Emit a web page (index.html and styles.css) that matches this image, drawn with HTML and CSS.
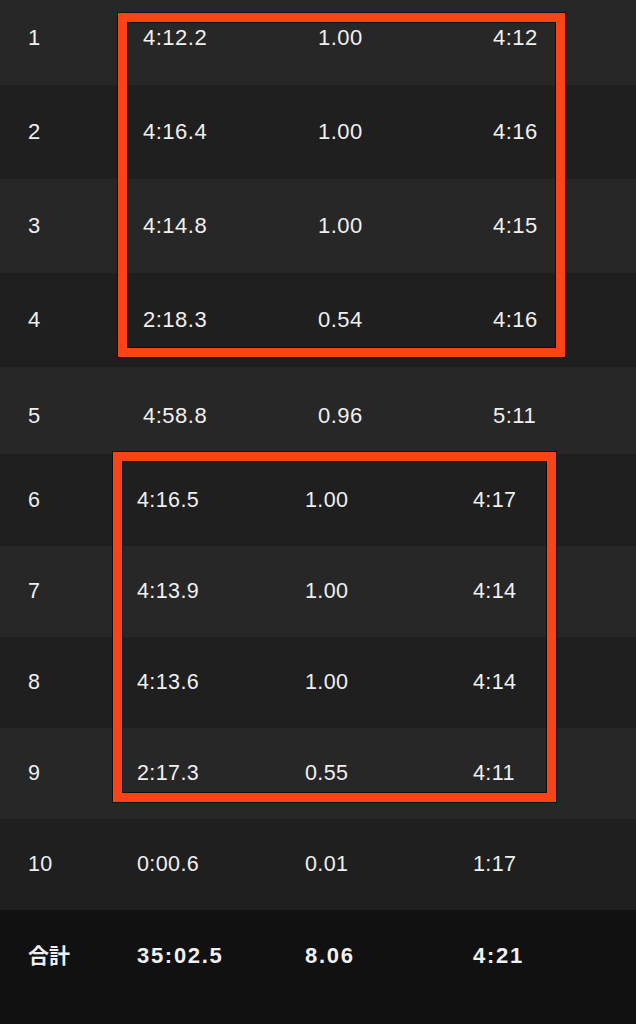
FILE: index.html
```html
<!DOCTYPE html>
<html lang="ja">
<head>
    <meta charset="UTF-8">
    <meta name="viewport" content="width=device-width, initial-scale=1.0">
    <title>Splits</title>
    <link rel="stylesheet" href="styles.css">
</head>
<body>
    <main class="splits">

        <!-- first part : laps 1 - 5 -->
        <div class="part part_top">
            <div class="row row_light row_first">
                <span>1</span><span>4:12.2</span><span>1.00</span><span>4:12</span>
            </div>
            <div class="row row_dark">
                <span>2</span><span>4:16.4</span><span>1.00</span><span>4:16</span>
            </div>
            <div class="row row_light">
                <span>3</span><span>4:14.8</span><span>1.00</span><span>4:15</span>
            </div>
            <div class="row row_dark">
                <span>4</span><span>2:18.3</span><span>0.54</span><span>4:16</span>
            </div>
            <div class="row row_light row_last">
                <span>5</span><span>4:58.8</span><span>0.96</span><span>5:11</span>
            </div>
            <div class="mark mark_top"></div>
        </div>

        <!-- second part : laps 6 - 10 and total -->
        <div class="part part_bottom">
            <div class="row row_dark">
                <span>6</span><span>4:16.5</span><span>1.00</span><span>4:17</span>
            </div>
            <div class="row row_light">
                <span>7</span><span>4:13.9</span><span>1.00</span><span>4:14</span>
            </div>
            <div class="row row_dark">
                <span>8</span><span>4:13.6</span><span>1.00</span><span>4:14</span>
            </div>
            <div class="row row_light">
                <span>9</span><span>2:17.3</span><span>0.55</span><span>4:11</span>
            </div>
            <div class="row row_dark">
                <span>10</span><span>0:00.6</span><span>0.01</span><span>1:17</span>
            </div>
            <div class="row row_total">
                <span class="total_label">合計</span><span>35:02.5</span><span>8.06</span><span>4:21</span>
            </div>
            <div class="mark mark_bottom"></div>
        </div>

    </main>
</body>
</html>
```

FILE: styles.css
```css
/* General */
*{
    box-sizing: border-box;
}
html, body{
    margin: 0px;
    padding: 0px;
}
body{
    background-color: #111111;
    color: #f0f0f0;
    font-family: "Liberation Sans", "Noto Sans CJK JP", sans-serif;
}
.splits{
    display: flex;
    flex-direction: column;
    width: 636px;
    min-height: 1024px;
}

/* Rows */
.part{
    position: relative;
    display: flex;
    flex-direction: column;
}
.row{
    display: grid;
    align-items: center;
    padding-left: 28px;
}
.row_light{
    background-color: #272727;
}
.row_dark{
    background-color: #1f1f1f;
}

.part_top .row{
    grid-template-columns: 115px 175px 175px 1fr;
    height: 94px;
    font-size: 22px;
    letter-spacing: 0.5px;
}
.part_top .row_first{
    height: 85px;
    padding-bottom: 9px;
}
.part_top .row_last{
    height: 87px;
    padding-top: 10px;
}

.part_bottom{
    flex: 1;
}
.part_bottom .row{
    grid-template-columns: 109px 168px 168px 1fr;
    height: 91px;
    font-size: 21.5px;
    letter-spacing: 0.4px;
}
.part_bottom .row:first-child{
    height: 92px;
}
.part_bottom .row_total{
    flex: 1;
    height: auto;
    min-height: 114px;
    padding-bottom: 23px;
    background-color: #111111;
    font-weight: bold;
    font-size: 22px;
    letter-spacing: 1.7px;
}
.total_label{
    margin-top: -4px;
    font-family: "Noto Sans CJK JP", sans-serif;
    font-size: 21px;
    letter-spacing: 0px;
}

/* Red marks drawn over the table */
.mark{
    position: absolute;
    border: 9px solid #fa4417;
    box-shadow: 0 0 0 1px rgba(0, 0, 0, 0.5), inset 0 0 0 1px rgba(0, 0, 0, 0.6);
}
.mark_top{
    left: 118px;
    top: 13px;
    width: 447px;
    height: 344px;
}
.mark_bottom{
    left: 113px;
    top: -2px;
    width: 443px;
    height: 350px;
}
```
